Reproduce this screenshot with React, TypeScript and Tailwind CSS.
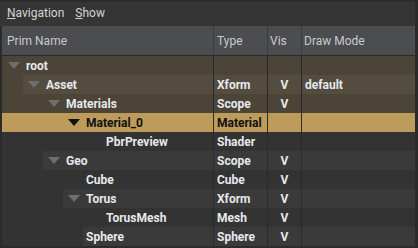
import React from 'react';

type Row = {
	name: string;
	depth: number;
	parent: boolean;
	type: string;
	vis: string;
	mode: string;
	kind: 'brown' | 'sel' | 'plain';
};

const rows: Row[] = [
	{ name: 'root', depth: 0, parent: true, type: '', vis: '', mode: '', kind: 'brown' },
	{ name: 'Asset', depth: 1, parent: true, type: 'Xform', vis: 'V', mode: 'default', kind: 'brown' },
	{ name: 'Materials', depth: 2, parent: true, type: 'Scope', vis: 'V', mode: '', kind: 'brown' },
	{ name: 'Material_0', depth: 3, parent: true, type: 'Material', vis: '', mode: '', kind: 'sel' },
	{ name: 'PbrPreview', depth: 4, parent: false, type: 'Shader', vis: '', mode: '', kind: 'plain' },
	{ name: 'Geo', depth: 2, parent: true, type: 'Scope', vis: 'V', mode: '', kind: 'plain' },
	{ name: 'Cube', depth: 3, parent: false, type: 'Cube', vis: 'V', mode: '', kind: 'plain' },
	{ name: 'Torus', depth: 3, parent: true, type: 'Xform', vis: 'V', mode: '', kind: 'plain' },
	{ name: 'TorusMesh', depth: 4, parent: false, type: 'Mesh', vis: 'V', mode: '', kind: 'plain' },
	{ name: 'Sphere', depth: 3, parent: false, type: 'Sphere', vis: 'V', mode: '', kind: 'plain' },
];

// colours for [base, alternate]
const palette = {
	brown: ['bg-[#4b4437]', 'bg-[#544c3f]'],
	sel: ['bg-[#bd9b5b]', 'bg-[#bd9b5b]'],
	plain: ['bg-[#333333]', 'bg-[#3a3a3a]'],
};

const Arrow = ({ dark }: { dark: boolean }) => (
	<svg width="12" height="7" viewBox="0 0 12 7" className="shrink-0">
		<polygon points="0,0 12,0 6,7" fill={dark ? '#111111' : '#6e6e6e'} />
	</svg>
);

const TreeRow = ({ row, index }: { row: Row; index: number }) => {
	const [base, alt] = palette[row.kind];
	const cell = index % 2 === 1 ? alt : base;
	const text = row.kind === 'sel' ? 'text-[#111111]' : 'text-[#e6e8ec]';
	const bandStart = row.parent ? row.depth * 20 + 1 : row.depth * 20 + 21;

	return (
		<div className={`flex h-[19px] ${base} ${text} font-bold`}>
			<div className="flex w-[212px] border-r border-[#2a2a2a]">
				<div style={{ width: bandStart }} className="shrink-0" />
				<div className={`flex flex-1 items-center ${cell} ${row.parent ? 'pl-[5px]' : 'pl-[3px]'}`}>
					{row.parent && <Arrow dark={row.kind === 'sel'} />}
					<span className={row.parent ? 'ml-[6px]' : ''}>{row.name}</span>
				</div>
			</div>
			<div className={`flex w-[54px] items-center border-r border-[#2a2a2a] pl-[3px] ${cell}`}>
				{row.type}
			</div>
			<div className={`flex w-[34px] items-center justify-center border-r border-[#2a2a2a] ${cell}`}>
				{row.vis}
			</div>
			<div className={`flex flex-1 items-center pl-[3px] ${cell}`}>{row.mode}</div>
		</div>
	);
};

const App = () => {
	return (
		<div className="w-[418px] h-[248px] bg-[#2b2b2b] overflow-hidden text-[12px] font-['Roboto',sans-serif]">
			<div className="h-[24px] mt-[2px] pb-[3px] bg-[#353535] flex items-center gap-[11px] px-[7px] text-[#d4d4d4] border-r-[3px] border-[#2b2b2b]">
				<span>
					<span className="underline">N</span>avigation
				</span>
				<span>
					<span className="underline">S</span>how
				</span>
			</div>
			<div className="border-l-[2px] border-r-[3px] border-[#2b2b2b]">
				<div className="flex h-[30px] bg-[#4b4d50] text-[#c8cacd] border-b border-[#2a2a2a]">
					<div className="flex w-[212px] items-center border-r border-[#3a3b3d] pl-[5px]">Prim Name</div>
					<div className="flex w-[54px] items-center border-r border-[#3a3b3d] pl-[3px]">Type</div>
					<div className="flex w-[34px] items-center border-r border-[#3a3b3d] pl-[2px]">Vis</div>
					<div className="flex flex-1 items-center pl-[2px]">Draw Mode</div>
				</div>
				{rows.map((r, i) => (
					<TreeRow key={r.name} row={r} index={i} />
				))}
			</div>
		</div>
	);
};

export default App;
